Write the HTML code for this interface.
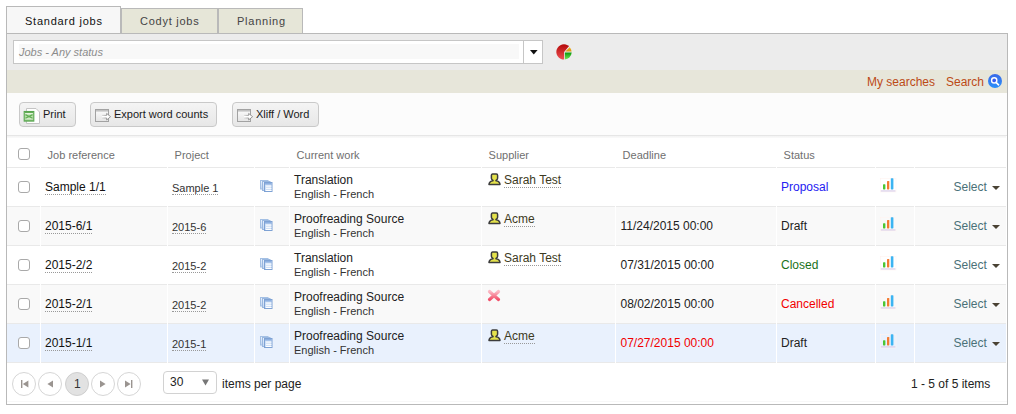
<!DOCTYPE html>
<html><head><meta charset="utf-8">
<style>
*{margin:0;padding:0;box-sizing:border-box}
html,body{width:1016px;height:414px;overflow:hidden;background:#fff;font-family:"Liberation Sans",sans-serif;color:#222}
.a{position:absolute}
.t{position:absolute;white-space:nowrap;line-height:14px}
.tab{position:absolute;border:1px solid #b9b9b9;border-bottom:none}
.tabtxt{font-size:11px;letter-spacing:0.75px;line-height:14px;position:absolute;white-space:nowrap}
.btn{position:absolute;top:102px;height:25px;border:1px solid #c9c9c9;border-radius:4px;background:linear-gradient(#f4f4f4,#e7e7e7)}
.hd{font-size:11px;color:#6f6f6f}
.row{position:absolute;left:7px;width:999px;height:39px;border-bottom:1px solid #e9e9e9}
.vd{position:absolute;top:0;width:1px;height:39px;background:#fff}
.cb{position:absolute;width:12px;height:12px;border:1px solid #a9a9a9;border-radius:3px;background:#fff}
.ref{font-size:12px;color:#111}
.ul{border-bottom:1px dotted #999}
.prj{font-size:11px;color:#333}
.cw1{font-size:12px;color:#222}
.cw2{font-size:11px;color:#333}
.sup{font-size:12px;color:#3d3a22}
.dl{font-size:12px;color:#222}
.st{font-size:12px}
.sel{font-size:12px;color:#4a7178}
.tri{position:absolute;width:0;height:0;border-left:4px solid transparent;border-right:4px solid transparent;border-top:4px solid #4a4234}
.pg{position:absolute;top:372px;width:24px;height:24px;border:1px solid #d6d6d6;border-radius:50%;background:#fff}
</style></head>
<body>
<!-- tabs -->
<div class="tab" style="left:6px;top:6px;width:115px;height:28px;background:#f7f7f7"></div>
<div class="tab" style="left:121px;top:8px;width:97px;height:26px;background:#e6e6d8"></div>
<div class="tab" style="left:218px;top:8px;width:85px;height:26px;background:#e6e6d8"></div>
<div class="tabtxt" style="left:25px;top:14px;color:#111">Standard jobs</div>
<div class="tabtxt" style="left:140px;top:14px;color:#444">Codyt jobs</div>
<div class="tabtxt" style="left:237px;top:14px;color:#444">Planning</div>

<!-- panel -->
<div class="a" style="left:6px;top:33px;width:1002px;height:372px;border:1px solid #b9b9b9;background:#fff"></div>
<div class="a" style="left:7px;top:34px;width:1000px;height:36px;background:#ececec"></div>
<div class="a" style="left:7px;top:70px;width:1000px;height:23px;background:#e7e6da"></div>
<div class="a" style="left:7px;top:93px;width:1000px;height:42px;background:#fcfcfc"></div>
<div class="a" style="left:7px;top:135px;width:1000px;height:1px;background:#e6e6e6"></div>

<!-- job filter input -->
<div class="a" style="left:13px;top:40px;width:530px;height:24px;border:1px solid #c6c6c6;background:#fff"></div>
<div class="a" style="left:19px;top:44px;width:500px;height:15px;background:#f8f8f8"></div>
<div class="a" style="left:523px;top:41px;width:1px;height:22px;background:#c6c6c6"></div>
<svg class="a" style="left:530px;top:50px" width="8" height="5" viewBox="0 0 8 5"><path d="M0 0 H7.6 L3.8 4.6 Z" fill="#111"/></svg>
<div class="t" style="left:19px;top:45px;font-size:11px;font-style:italic;color:#8c8c8c">Jobs - Any status</div>
<!-- pie -->
<svg class="a" style="left:554px;top:42px" width="20" height="20" viewBox="0 0 20 20">
<defs>
<linearGradient id="gr" x1="0" y1="0" x2="0" y2="1"><stop offset="0" stop-color="#b40808"/><stop offset="1" stop-color="#ee5254"/></linearGradient>
<linearGradient id="gg" x1="0" y1="0" x2="0" y2="1"><stop offset="0" stop-color="#0c9a0c"/><stop offset="1" stop-color="#76e85a"/></linearGradient>
<linearGradient id="go" x1="0" y1="0" x2="0" y2="1"><stop offset="0" stop-color="#f0b020"/><stop offset="1" stop-color="#dc9a10"/></linearGradient>
</defs>
<path d="M10.1 9.9 L15.1 4.1 A7.7 7.7 0 1 0 10.1 17.6 Z" fill="url(#gr)"/>
<path d="M11.3 9.4 L15.7 5.2 A7.5 7.5 0 0 1 17.6 9.4 Z" fill="url(#go)"/>
<path d="M10.9 10.6 L17.7 10.6 A7.6 7.6 0 0 1 10.9 17.5 Z" fill="url(#gg)"/>
</svg>

<!-- search links -->
<div class="t" style="left:867px;top:75px;font-size:12px;color:#bc4a16">My searches</div>
<div class="t" style="left:946px;top:75px;font-size:12px;color:#bc4a16">Search</div>
<svg class="a" style="left:988px;top:74px" width="14" height="14" viewBox="0 0 14 14">
<defs><linearGradient id="gb" x1="0" y1="0" x2="0" y2="1"><stop offset="0" stop-color="#3a6ae8"/><stop offset="1" stop-color="#2a90fa"/></linearGradient></defs>
<circle cx="7" cy="7" r="7" fill="url(#gb)"/>
<circle cx="6.2" cy="6.4" r="2.6" fill="#3a5cf0" stroke="#fff" stroke-width="1.4"/>
<path d="M8 8.3 L10.6 10.8" stroke="#fff" stroke-width="1.6" stroke-linecap="round"/>
</svg>

<!-- buttons -->
<div class="btn" style="left:19px;width:57px"></div>
<svg class="a" style="left:23px;top:107px" width="18" height="18" viewBox="0 0 18 18">
<path d="M3.5 1.5 H13 L16.5 5 V16.5 H3.5 Z" fill="#fff" stroke="#c4c4c4"/>
<rect x="1.2" y="4.5" width="9.6" height="9.6" fill="#b8e0a8" stroke="#58a650" stroke-width="1.1"/>
<rect x="1.8" y="5.1" width="8.4" height="1.1" fill="#5aa84e"/>
<rect x="2.2" y="6.2" width="7.6" height="1.1" fill="#f4faf0"/>
<rect x="2.2" y="11.6" width="7.6" height="1.1" fill="#f4faf0"/>
<rect x="1.8" y="12.7" width="8.4" height="0.9" fill="#5aa84e"/>
<path d="M2.4 7.6 L9.6 11.3 M9.6 7.6 L2.4 11.3" stroke="#62ae56" stroke-width="1.2"/>
</svg>
<div class="t" style="left:43px;top:107px;font-size:11px;color:#1a1a1a">Print</div>

<div class="btn" style="left:90px;width:127px"></div>
<svg class="a" style="left:94px;top:108px" width="18" height="15" viewBox="0 0 18 15"><defs><linearGradient id="eg" x1="0" y1="0" x2="0" y2="1"><stop offset="0" stop-color="#fdfdfd"/><stop offset="1" stop-color="#e4e4e4"/></linearGradient><linearGradient id="ea" x1="0" y1="0" x2="1" y2="0"><stop offset="0" stop-color="#d8d8d8"/><stop offset="0.6" stop-color="#8c8c8c"/></linearGradient></defs>
<rect x="1.5" y="1.5" width="13" height="12" fill="url(#eg)" stroke="#a2a2a2"/>
<rect x="2" y="2" width="12" height="1.6" fill="#c2c2c2"/>
<path d="M8 7.4 H12.6 V5.4 L16.6 8.7 L12.6 12 V10 H8" fill="#fff" stroke="url(#ea)" stroke-width="0.9"/>
</svg>
<div class="t" style="left:114px;top:107px;font-size:11px;color:#1a1a1a">Export word counts</div>

<div class="btn" style="left:232px;width:87px"></div>
<svg class="a" style="left:236px;top:108px" width="18" height="15" viewBox="0 0 18 15">
<rect x="1.5" y="1.5" width="13" height="12" fill="url(#eg)" stroke="#a2a2a2"/>
<rect x="2" y="2" width="12" height="1.6" fill="#c2c2c2"/>
<path d="M8 7.4 H12.6 V5.4 L16.6 8.7 L12.6 12 V10 H8" fill="#fff" stroke="url(#ea)" stroke-width="0.9"/>
</svg>
<div class="t" style="left:256px;top:107px;font-size:11px;color:#1a1a1a">Xliff / Word</div>

<!-- table header -->
<div class="row" style="top:136px;height:32px;background:#fff"><div class="vd" style="left:33px;height:32px"></div><div class="vd" style="left:160px;height:32px"></div><div class="vd" style="left:247px;height:32px"></div><div class="vd" style="left:282px;height:32px"></div><div class="vd" style="left:474px;height:32px"></div><div class="vd" style="left:608px;height:32px"></div><div class="vd" style="left:769px;height:32px"></div><div class="vd" style="left:868px;height:32px"></div><div class="vd" style="left:907px;height:32px"></div></div>
<div class="a" style="left:7px;top:136px;width:999px;height:2px;background:linear-gradient(#f3f3f3,#fafafa)"></div>
<div class="cb" style="left:18px;top:148px"></div>
<div class="t hd" style="left:47.6px;top:148px">Job reference</div>
<div class="t hd" style="left:174.6px;top:148px">Project</div>
<div class="t hd" style="left:296.6px;top:148px">Current work</div>
<div class="t hd" style="left:488.6px;top:148px">Supplier</div>
<div class="t hd" style="left:622.6px;top:148px">Deadline</div>
<div class="t hd" style="left:783.6px;top:148px">Status</div>

<div class="row" style="top:168px;background:#fff"><div class="vd" style="left:33px"></div><div class="vd" style="left:160px"></div><div class="vd" style="left:247px"></div><div class="vd" style="left:282px"></div><div class="vd" style="left:474px"></div><div class="vd" style="left:608px"></div><div class="vd" style="left:769px"></div><div class="vd" style="left:868px"></div><div class="vd" style="left:907px"></div></div>
<div class="cb" style="left:18px;top:181px"></div>
<div class="t ref" style="left:45px;top:180px"><span class="ul">Sample 1/1</span></div>
<div class="t prj" style="left:172px;top:181px"><span class="ul">Sample 1</span></div>
<svg class="a" style="left:259px;top:179px" width="14" height="14" viewBox="0 0 14 14">
<defs><linearGradient id="dg0" x1="0" y1="0" x2="1" y2="1"><stop offset="0" stop-color="#f0f6fe"/><stop offset="1" stop-color="#9ebde6"/></linearGradient></defs>
<rect x="1.5" y="1.5" width="7.5" height="8.5" fill="url(#dg0)" stroke="#a4c0e4" stroke-width="1"/>
<rect x="3.5" y="2.5" width="7.5" height="9" fill="url(#dg0)" stroke="#9ab8e0" stroke-width="1"/>
<rect x="5.5" y="3.5" width="7.5" height="9" fill="#cfe0f6" stroke="#7ea2d4" stroke-width="1"/>
<rect x="6" y="4" width="6.5" height="1.6" fill="#8eb0e0"/>
<rect x="7" y="6.6" width="5.5" height="1" fill="#fff"/><rect x="7" y="8.8" width="5.5" height="1" fill="#fff"/><rect x="7" y="11" width="5.5" height="1" fill="#fff"/>
</svg>
<div class="t cw1" style="left:294px;top:173px">Translation</div>
<div class="t cw2" style="left:294px;top:187px">English - French</div>
<svg class="a" style="left:488px;top:173px" width="13" height="13" viewBox="0 0 13 13">
<path d="M4.6 1.1 H8.4 Q9.6 1.1 9.6 2.4 V5.2 Q9.6 6.5 8 7.3 V7.7 C10.2 8 11.8 9 12 11.4 H1 C1.2 9 2.8 8 5 7.7 V7.3 Q3.4 6.5 3.4 5.2 V2.4 Q3.4 1.1 4.6 1.1 Z" fill="#e4e24c" stroke="#3c3c3c" stroke-width="1.5" stroke-linejoin="round"/>
</svg>
<div class="t sup" style="left:504px;top:173px"><span class="ul">Sarah Test</span></div>
<div class="t st" style="left:781px;top:180px;color:#2420f2">Proposal</div>
<svg class="a" style="left:880px;top:178px" width="17" height="15" viewBox="0 0 17 15">
<rect x="0.6" y="12.4" width="15" height="1.3" fill="#d6cae8"/>
<rect x="0.5" y="0.5" width="15.5" height="13.5" fill="none" stroke="#fff4f0" stroke-width="0.6"/>
<rect x="3" y="6.2" width="2.4" height="5.2" rx="0.6" fill="#4cc634"/>
<rect x="7" y="3" width="2.3" height="8.4" rx="0.6" fill="#f47a30"/>
<rect x="10.8" y="0.2" width="2.6" height="11.2" rx="0.6" fill="#3cb4f2"/>
</svg>
<div class="t sel" style="left:953.5px;top:180px">Select</div>
<div class="tri" style="left:992px;top:186px"></div>
<div class="row" style="top:207px;background:#f9f9f9"><div class="vd" style="left:33px"></div><div class="vd" style="left:160px"></div><div class="vd" style="left:247px"></div><div class="vd" style="left:282px"></div><div class="vd" style="left:474px"></div><div class="vd" style="left:608px"></div><div class="vd" style="left:769px"></div><div class="vd" style="left:868px"></div><div class="vd" style="left:907px"></div></div>
<div class="cb" style="left:18px;top:220px"></div>
<div class="t ref" style="left:45px;top:219px"><span class="ul">2015-6/1</span></div>
<div class="t prj" style="left:172px;top:220px"><span class="ul">2015-6</span></div>
<svg class="a" style="left:259px;top:218px" width="14" height="14" viewBox="0 0 14 14">
<defs><linearGradient id="dg1" x1="0" y1="0" x2="1" y2="1"><stop offset="0" stop-color="#f0f6fe"/><stop offset="1" stop-color="#9ebde6"/></linearGradient></defs>
<rect x="1.5" y="1.5" width="7.5" height="8.5" fill="url(#dg1)" stroke="#a4c0e4" stroke-width="1"/>
<rect x="3.5" y="2.5" width="7.5" height="9" fill="url(#dg1)" stroke="#9ab8e0" stroke-width="1"/>
<rect x="5.5" y="3.5" width="7.5" height="9" fill="#cfe0f6" stroke="#7ea2d4" stroke-width="1"/>
<rect x="6" y="4" width="6.5" height="1.6" fill="#8eb0e0"/>
<rect x="7" y="6.6" width="5.5" height="1" fill="#fff"/><rect x="7" y="8.8" width="5.5" height="1" fill="#fff"/><rect x="7" y="11" width="5.5" height="1" fill="#fff"/>
</svg>
<div class="t cw1" style="left:294px;top:212px">Proofreading Source</div>
<div class="t cw2" style="left:294px;top:226px">English - French</div>
<svg class="a" style="left:488px;top:212px" width="13" height="13" viewBox="0 0 13 13">
<path d="M4.6 1.1 H8.4 Q9.6 1.1 9.6 2.4 V5.2 Q9.6 6.5 8 7.3 V7.7 C10.2 8 11.8 9 12 11.4 H1 C1.2 9 2.8 8 5 7.7 V7.3 Q3.4 6.5 3.4 5.2 V2.4 Q3.4 1.1 4.6 1.1 Z" fill="#e4e24c" stroke="#3c3c3c" stroke-width="1.5" stroke-linejoin="round"/>
</svg>
<div class="t sup" style="left:504px;top:212px"><span class="ul">Acme</span></div>
<div class="t dl" style="left:620.5px;top:219px;color:#222">11/24/2015 00:00</div>
<div class="t st" style="left:781px;top:219px;color:#222">Draft</div>
<svg class="a" style="left:880px;top:217px" width="17" height="15" viewBox="0 0 17 15">
<rect x="0.6" y="12.4" width="15" height="1.3" fill="#d6cae8"/>
<rect x="0.5" y="0.5" width="15.5" height="13.5" fill="none" stroke="#fff4f0" stroke-width="0.6"/>
<rect x="3" y="6.2" width="2.4" height="5.2" rx="0.6" fill="#4cc634"/>
<rect x="7" y="3" width="2.3" height="8.4" rx="0.6" fill="#f47a30"/>
<rect x="10.8" y="0.2" width="2.6" height="11.2" rx="0.6" fill="#3cb4f2"/>
</svg>
<div class="t sel" style="left:953.5px;top:219px">Select</div>
<div class="tri" style="left:992px;top:225px"></div>
<div class="row" style="top:246px;background:#fff"><div class="vd" style="left:33px"></div><div class="vd" style="left:160px"></div><div class="vd" style="left:247px"></div><div class="vd" style="left:282px"></div><div class="vd" style="left:474px"></div><div class="vd" style="left:608px"></div><div class="vd" style="left:769px"></div><div class="vd" style="left:868px"></div><div class="vd" style="left:907px"></div></div>
<div class="cb" style="left:18px;top:259px"></div>
<div class="t ref" style="left:45px;top:258px"><span class="ul">2015-2/2</span></div>
<div class="t prj" style="left:172px;top:259px"><span class="ul">2015-2</span></div>
<svg class="a" style="left:259px;top:257px" width="14" height="14" viewBox="0 0 14 14">
<defs><linearGradient id="dg2" x1="0" y1="0" x2="1" y2="1"><stop offset="0" stop-color="#f0f6fe"/><stop offset="1" stop-color="#9ebde6"/></linearGradient></defs>
<rect x="1.5" y="1.5" width="7.5" height="8.5" fill="url(#dg2)" stroke="#a4c0e4" stroke-width="1"/>
<rect x="3.5" y="2.5" width="7.5" height="9" fill="url(#dg2)" stroke="#9ab8e0" stroke-width="1"/>
<rect x="5.5" y="3.5" width="7.5" height="9" fill="#cfe0f6" stroke="#7ea2d4" stroke-width="1"/>
<rect x="6" y="4" width="6.5" height="1.6" fill="#8eb0e0"/>
<rect x="7" y="6.6" width="5.5" height="1" fill="#fff"/><rect x="7" y="8.8" width="5.5" height="1" fill="#fff"/><rect x="7" y="11" width="5.5" height="1" fill="#fff"/>
</svg>
<div class="t cw1" style="left:294px;top:251px">Translation</div>
<div class="t cw2" style="left:294px;top:265px">English - French</div>
<svg class="a" style="left:488px;top:251px" width="13" height="13" viewBox="0 0 13 13">
<path d="M4.6 1.1 H8.4 Q9.6 1.1 9.6 2.4 V5.2 Q9.6 6.5 8 7.3 V7.7 C10.2 8 11.8 9 12 11.4 H1 C1.2 9 2.8 8 5 7.7 V7.3 Q3.4 6.5 3.4 5.2 V2.4 Q3.4 1.1 4.6 1.1 Z" fill="#e4e24c" stroke="#3c3c3c" stroke-width="1.5" stroke-linejoin="round"/>
</svg>
<div class="t sup" style="left:504px;top:251px"><span class="ul">Sarah Test</span></div>
<div class="t dl" style="left:620.5px;top:258px;color:#222">07/31/2015 00:00</div>
<div class="t st" style="left:781px;top:258px;color:#1a721a">Closed</div>
<svg class="a" style="left:880px;top:256px" width="17" height="15" viewBox="0 0 17 15">
<rect x="0.6" y="12.4" width="15" height="1.3" fill="#d6cae8"/>
<rect x="0.5" y="0.5" width="15.5" height="13.5" fill="none" stroke="#fff4f0" stroke-width="0.6"/>
<rect x="3" y="6.2" width="2.4" height="5.2" rx="0.6" fill="#4cc634"/>
<rect x="7" y="3" width="2.3" height="8.4" rx="0.6" fill="#f47a30"/>
<rect x="10.8" y="0.2" width="2.6" height="11.2" rx="0.6" fill="#3cb4f2"/>
</svg>
<div class="t sel" style="left:953.5px;top:258px">Select</div>
<div class="tri" style="left:992px;top:264px"></div>
<div class="row" style="top:285px;background:#f9f9f9"><div class="vd" style="left:33px"></div><div class="vd" style="left:160px"></div><div class="vd" style="left:247px"></div><div class="vd" style="left:282px"></div><div class="vd" style="left:474px"></div><div class="vd" style="left:608px"></div><div class="vd" style="left:769px"></div><div class="vd" style="left:868px"></div><div class="vd" style="left:907px"></div></div>
<div class="cb" style="left:18px;top:298px"></div>
<div class="t ref" style="left:45px;top:297px"><span class="ul">2015-2/1</span></div>
<div class="t prj" style="left:172px;top:298px"><span class="ul">2015-2</span></div>
<svg class="a" style="left:259px;top:296px" width="14" height="14" viewBox="0 0 14 14">
<defs><linearGradient id="dg3" x1="0" y1="0" x2="1" y2="1"><stop offset="0" stop-color="#f0f6fe"/><stop offset="1" stop-color="#9ebde6"/></linearGradient></defs>
<rect x="1.5" y="1.5" width="7.5" height="8.5" fill="url(#dg3)" stroke="#a4c0e4" stroke-width="1"/>
<rect x="3.5" y="2.5" width="7.5" height="9" fill="url(#dg3)" stroke="#9ab8e0" stroke-width="1"/>
<rect x="5.5" y="3.5" width="7.5" height="9" fill="#cfe0f6" stroke="#7ea2d4" stroke-width="1"/>
<rect x="6" y="4" width="6.5" height="1.6" fill="#8eb0e0"/>
<rect x="7" y="6.6" width="5.5" height="1" fill="#fff"/><rect x="7" y="8.8" width="5.5" height="1" fill="#fff"/><rect x="7" y="11" width="5.5" height="1" fill="#fff"/>
</svg>
<div class="t cw1" style="left:294px;top:290px">Proofreading Source</div>
<div class="t cw2" style="left:294px;top:304px">English - French</div>
<svg class="a" style="left:487px;top:288px" width="14" height="14" viewBox="0 0 14 14">
<defs><linearGradient id="xg" x1="0" y1="0" x2="0" y2="1"><stop offset="0" stop-color="#fbb8c4"/><stop offset="1" stop-color="#f2506a"/></linearGradient></defs>
<path d="M2.5 3.5 L11.5 11.5 M11.5 3.5 L2.5 11.5" stroke="url(#xg)" stroke-width="3.2" stroke-linecap="round"/>
</svg>
<div class="t dl" style="left:620.5px;top:297px;color:#222">08/02/2015 00:00</div>
<div class="t st" style="left:781px;top:297px;color:#f20000">Cancelled</div>
<svg class="a" style="left:880px;top:295px" width="17" height="15" viewBox="0 0 17 15">
<rect x="0.6" y="12.4" width="15" height="1.3" fill="#d6cae8"/>
<rect x="0.5" y="0.5" width="15.5" height="13.5" fill="none" stroke="#fff4f0" stroke-width="0.6"/>
<rect x="3" y="6.2" width="2.4" height="5.2" rx="0.6" fill="#4cc634"/>
<rect x="7" y="3" width="2.3" height="8.4" rx="0.6" fill="#f47a30"/>
<rect x="10.8" y="0.2" width="2.6" height="11.2" rx="0.6" fill="#3cb4f2"/>
</svg>
<div class="t sel" style="left:953.5px;top:297px">Select</div>
<div class="tri" style="left:992px;top:303px"></div>
<div class="row" style="top:324px;background:#e9f1fd"><div class="vd" style="left:33px"></div><div class="vd" style="left:160px"></div><div class="vd" style="left:247px"></div><div class="vd" style="left:282px"></div><div class="vd" style="left:474px"></div><div class="vd" style="left:608px"></div><div class="vd" style="left:769px"></div><div class="vd" style="left:868px"></div><div class="vd" style="left:907px"></div></div>
<div class="cb" style="left:18px;top:337px"></div>
<div class="t ref" style="left:45px;top:336px"><span class="ul">2015-1/1</span></div>
<div class="t prj" style="left:172px;top:337px"><span class="ul">2015-1</span></div>
<svg class="a" style="left:259px;top:335px" width="14" height="14" viewBox="0 0 14 14">
<defs><linearGradient id="dg4" x1="0" y1="0" x2="1" y2="1"><stop offset="0" stop-color="#f0f6fe"/><stop offset="1" stop-color="#9ebde6"/></linearGradient></defs>
<rect x="1.5" y="1.5" width="7.5" height="8.5" fill="url(#dg4)" stroke="#a4c0e4" stroke-width="1"/>
<rect x="3.5" y="2.5" width="7.5" height="9" fill="url(#dg4)" stroke="#9ab8e0" stroke-width="1"/>
<rect x="5.5" y="3.5" width="7.5" height="9" fill="#cfe0f6" stroke="#7ea2d4" stroke-width="1"/>
<rect x="6" y="4" width="6.5" height="1.6" fill="#8eb0e0"/>
<rect x="7" y="6.6" width="5.5" height="1" fill="#fff"/><rect x="7" y="8.8" width="5.5" height="1" fill="#fff"/><rect x="7" y="11" width="5.5" height="1" fill="#fff"/>
</svg>
<div class="t cw1" style="left:294px;top:329px">Proofreading Source</div>
<div class="t cw2" style="left:294px;top:343px">English - French</div>
<svg class="a" style="left:488px;top:329px" width="13" height="13" viewBox="0 0 13 13">
<path d="M4.6 1.1 H8.4 Q9.6 1.1 9.6 2.4 V5.2 Q9.6 6.5 8 7.3 V7.7 C10.2 8 11.8 9 12 11.4 H1 C1.2 9 2.8 8 5 7.7 V7.3 Q3.4 6.5 3.4 5.2 V2.4 Q3.4 1.1 4.6 1.1 Z" fill="#e4e24c" stroke="#3c3c3c" stroke-width="1.5" stroke-linejoin="round"/>
</svg>
<div class="t sup" style="left:504px;top:329px"><span class="ul">Acme</span></div>
<div class="t dl" style="left:620.5px;top:336px;color:#f20000">07/27/2015 00:00</div>
<div class="t st" style="left:781px;top:336px;color:#222">Draft</div>
<svg class="a" style="left:880px;top:334px" width="17" height="15" viewBox="0 0 17 15">
<rect x="0.6" y="12.4" width="15" height="1.3" fill="#d6cae8"/>
<rect x="0.5" y="0.5" width="15.5" height="13.5" fill="none" stroke="#fff4f0" stroke-width="0.6"/>
<rect x="3" y="6.2" width="2.4" height="5.2" rx="0.6" fill="#4cc634"/>
<rect x="7" y="3" width="2.3" height="8.4" rx="0.6" fill="#f47a30"/>
<rect x="10.8" y="0.2" width="2.6" height="11.2" rx="0.6" fill="#3cb4f2"/>
</svg>
<div class="t sel" style="left:953.5px;top:336px">Select</div>
<div class="tri" style="left:992px;top:342px"></div>

<!-- footer -->
<div class="a" style="left:7px;top:401px;width:1000px;height:1px;background:#f8f8f8"></div>
<div class="pg" style="left:12px"></div>
<div class="pg" style="left:38px"></div>
<div class="pg" style="left:65px;background:#e2e2e2;border-color:#cfcfcf"></div>
<div class="pg" style="left:91px"></div>
<div class="pg" style="left:117px"></div>
<svg class="a" style="left:12px;top:372px" width="140" height="24" viewBox="0 0 140 24">
<g fill="#9a9490">
<rect x="9" y="8" width="1.4" height="8"/><path d="M10.8 12 L16.4 8.4 V15.6 Z"/>
<path d="M35.4 12 L41 8.6 V15.4 Z"/>
<path d="M88 8.6 L93.6 12 L88 15.4 Z"/>
<path d="M113 8.4 L118.6 12 L113 15.6 Z"/><rect x="119" y="8" width="1.4" height="8"/>
</g>
</svg>
<div class="t" style="left:74px;top:377px;font-size:12px;color:#333">1</div>
<div class="a" style="left:163px;top:371px;width:54px;height:23px;border:1px solid #d2d2d2;border-radius:4px;background:#fff"></div>
<div class="t" style="left:170px;top:375px;font-size:12px;color:#222">30</div>
<svg class="a" style="left:202px;top:379px" width="7" height="7" viewBox="0 0 7 7"><path d="M0 0.5 H7 L3.5 6.5 Z" fill="#777"/></svg>
<div class="t" style="left:222px;top:377px;font-size:12px;color:#222">items per page</div>
<div class="t" style="left:911px;top:377px;font-size:12px;color:#222">1 - 5 of 5 items</div>
</body></html>
